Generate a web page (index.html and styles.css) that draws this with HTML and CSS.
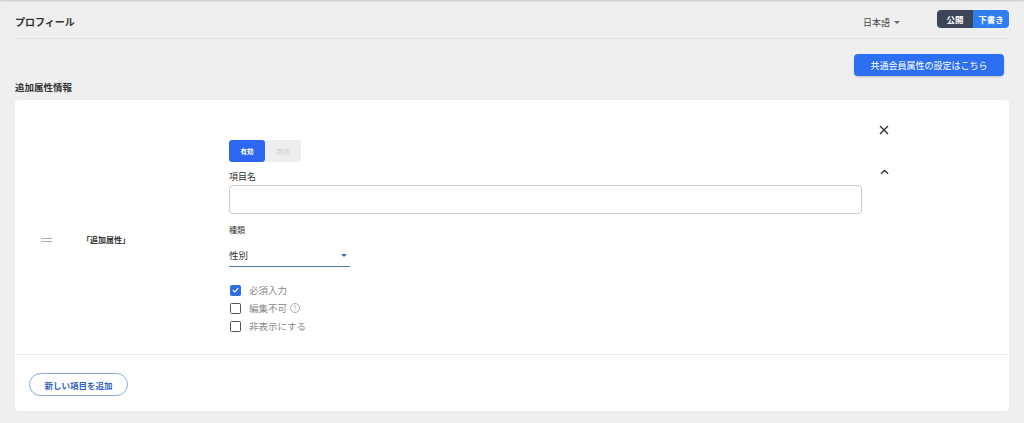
FILE: index.html
```html
<!DOCTYPE html>
<html lang="ja">
<head>
<meta charset="utf-8">
<link rel="stylesheet" href="styles.css">
</head>
<body>
<div class="page">
  <header class="topbar">
    <h1 class="title">プロフィール</h1>
    <div class="top-right">
      <div class="lang">日本語 <span class="caret"></span></div>
      <div class="status">
        <span class="status-pub">公開</span>
        <span class="status-draft">下書き</span>
      </div>
    </div>
  </header>
  <div class="sub-actions">
    <button class="btn-primary">共通会員属性の設定はこちら</button>
  </div>
  <h2 class="section-title">追加属性情報</h2>
  <section class="card">
    <div class="card-body">
      <div class="item-head">
        <span class="handle"></span>
        <span class="item-name">「追加属性」</span>
      </div>
      <div class="form">
        <div class="seg">
          <span class="seg-on">有効</span>
          <span class="seg-off">無効</span>
        </div>
        <label class="label">項目名</label>
        <div class="input"></div>
        <label class="label small">種類</label>
        <div class="select">
          <span>性別</span>
          <span class="sel-caret"></span>
        </div>
        <div class="checks">
          <div class="check"><span class="box on"><svg viewBox="0 0 12 12" width="12" height="12"><path d="M2.5 6.2 L5 8.6 L9.6 3.6" fill="none" stroke="#fff" stroke-width="1.6"/></svg></span>必須入力</div>
          <div class="check"><span class="box"></span>編集不可<span class="help">?</span></div>
          <div class="check"><span class="box"></span>非表示にする</div>
        </div>
      </div>
      <div class="actions">
        <svg class="close" viewBox="0 0 10 10" width="10" height="10"><path d="M1 1 L9 9 M9 1 L1 9" stroke="#333" stroke-width="1.4"/></svg>
        <svg class="chev" viewBox="0 0 10 6" width="9" height="6"><path d="M1 5 L5 1.3 L9 5" fill="none" stroke="#333" stroke-width="1.5"/></svg>
      </div>
    </div>
    <div class="card-foot">
      <button class="btn-outline">新しい項目を追加</button>
    </div>
  </section>
</div>
</body>
</html>
```

FILE: styles.css
```css
* { box-sizing: border-box; }
html, body { margin: 0; padding: 0; }
body {
  background: #efefef;
  font-family: "Noto Sans CJK JP", "Noto Sans", sans-serif;
  color: #333;
  width: 1024px;
  height: 423px;
  overflow: hidden;
}
.page {
  box-shadow: inset 0 2px 2px -1px #c8c8c8;
  height: 423px;
  padding: 0 15px;
}
.topbar {
  height: 39px;
  border-bottom: 1px solid #e3e3e3;
  display: flex;
  align-items: center;
  justify-content: space-between;
}
.title {
  margin: 0;
  font-size: 10px;
  font-weight: 700;
  color: #333;
  padding-top: 5px;
}
.top-right {
  display: flex;
  align-items: center;
  gap: 37px;
}
.lang {
  font-size: 9px;
  color: #444;
  display: flex;
  align-items: center;
  gap: 4px;
  padding-top: 6px;
}
.caret {
  width: 0; height: 0;
  border-left: 3px solid transparent;
  border-right: 3px solid transparent;
  border-top: 3px solid #666;
  margin-top: 1px;
}
.status {
  display: flex;
  height: 18px;
  border-radius: 4px;
  overflow: hidden;
  font-size: 8.5px;
  font-weight: 700;
  color: #fff;
  margin-top: -1px;
}
.status span {
  width: 36px;
  display: flex;
  align-items: center;
  justify-content: center;
}
.status-pub { background: #3c4658; }
.status-draft { background: #2f7df2; }
.sub-actions {
  display: flex;
  justify-content: flex-end;
  padding: 15px 5px 0 0;
}
.btn-primary {
  width: 150px;
  height: 22px;
  border: none;
  border-radius: 4px;
  background: #2d6ff2;
  color: #fff;
  font-family: inherit;
  font-size: 9px;
  padding: 0;
  box-shadow: 0 1px 2px rgba(0,0,0,0.2);
}
.section-title {
  margin: 4px 0 0;
  font-size: 9.5px;
  font-weight: 700;
  line-height: 14px;
  color: #333;
}
.card {
  margin-top: 6px;
  background: #fff;
  border-radius: 4px;
  height: 311px;
  display: flex;
  flex-direction: column;
}
.card-body {
  display: flex;
  padding: 24px 0 0;
  height: 256px;
  border-bottom: 1px solid #ececec;
}
.item-head {
  width: 214px;
  display: flex;
  align-items: center;
  padding-left: 26px;
  padding-top: 2px;
}
.handle {
  width: 11px;
  height: 4px;
  border-top: 1px solid #aaa;
  border-bottom: 1px solid #aaa;
}
.item-name {
  margin-left: 30px;
  font-size: 8px;
  font-weight: 700;
  color: #333;
}
.form {
  width: 633px;
  padding-top: 16px;
  display: flex;
  flex-direction: column;
}
.seg {
  display: flex;
  height: 22px;
}
.seg span {
  width: 36px;
  display: flex;
  align-items: center;
  justify-content: center;
  font-size: 6.5px;
  border-radius: 3px;
}
.seg-on { background: #2c66f2; color: #fff; font-weight: 700; }
.seg-off { background: #eeeeee; color: #d0d0d0; border-radius: 0 3px 3px 0 !important; }
.label {
  margin-top: 9px;
  font-size: 9px;
  line-height: 12px;
  color: #333;
}
.label.small { font-size: 8px; margin-top: 10px; }
.input {
  margin-top: 2px;
  height: 29px;
  border: 1px solid #c9c9c9;
  border-radius: 4px;
}
.select {
  margin-top: 8px;
  width: 121px;
  height: 23px;
  border-bottom: 1px solid #4f7bb5;
  display: flex;
  align-items: center;
  justify-content: space-between;
  font-size: 9.5px;
  color: #333;
  padding-right: 3px;
}
.sel-caret {
  width: 0; height: 0;
  border-left: 3px solid transparent;
  border-right: 3px solid transparent;
  border-top: 3px solid #3a6fb5;
}
.checks {
  margin-top: 14px;
  display: flex;
  flex-direction: column;
}
.check {
  height: 18px;
  display: flex;
  align-items: center;
  font-size: 9.5px;
  color: #8a8a8a;
  padding-left: 1px;
}
.box {
  width: 11px;
  height: 11px;
  border: 1.5px solid #555;
  border-radius: 1.5px;
  margin-right: 8px;
  display: flex;
  align-items: center;
  justify-content: center;
}
.box.on { background: #2f6fe6; border-color: #2f6fe6; }
.box svg { width: 10px; height: 10px; }
.help {
  margin-left: 3px;
  width: 10px;
  height: 10px;
  border: 1px solid #aaa;
  border-radius: 50%;
  font-size: 7px;
  color: #aaa;
  display: flex;
  align-items: center;
  justify-content: center;
  line-height: 1;
}
.actions {
  margin-left: 17px;
  display: flex;
  flex-direction: column;
  align-items: center;
  width: 10px;
}
.close { margin-top: 1px; }
.chev { margin-top: 34px; }
.card-foot {
  padding: 15px 14px;
}
.btn-outline {
  width: 99px;
  height: 23px;
  border: 1px solid #8aa8d8;
  border-radius: 12px;
  background: #fff;
  color: #2f64c2;
  font-family: inherit;
  font-size: 8.5px;
  font-weight: 700;
  padding: 0;
}
```
